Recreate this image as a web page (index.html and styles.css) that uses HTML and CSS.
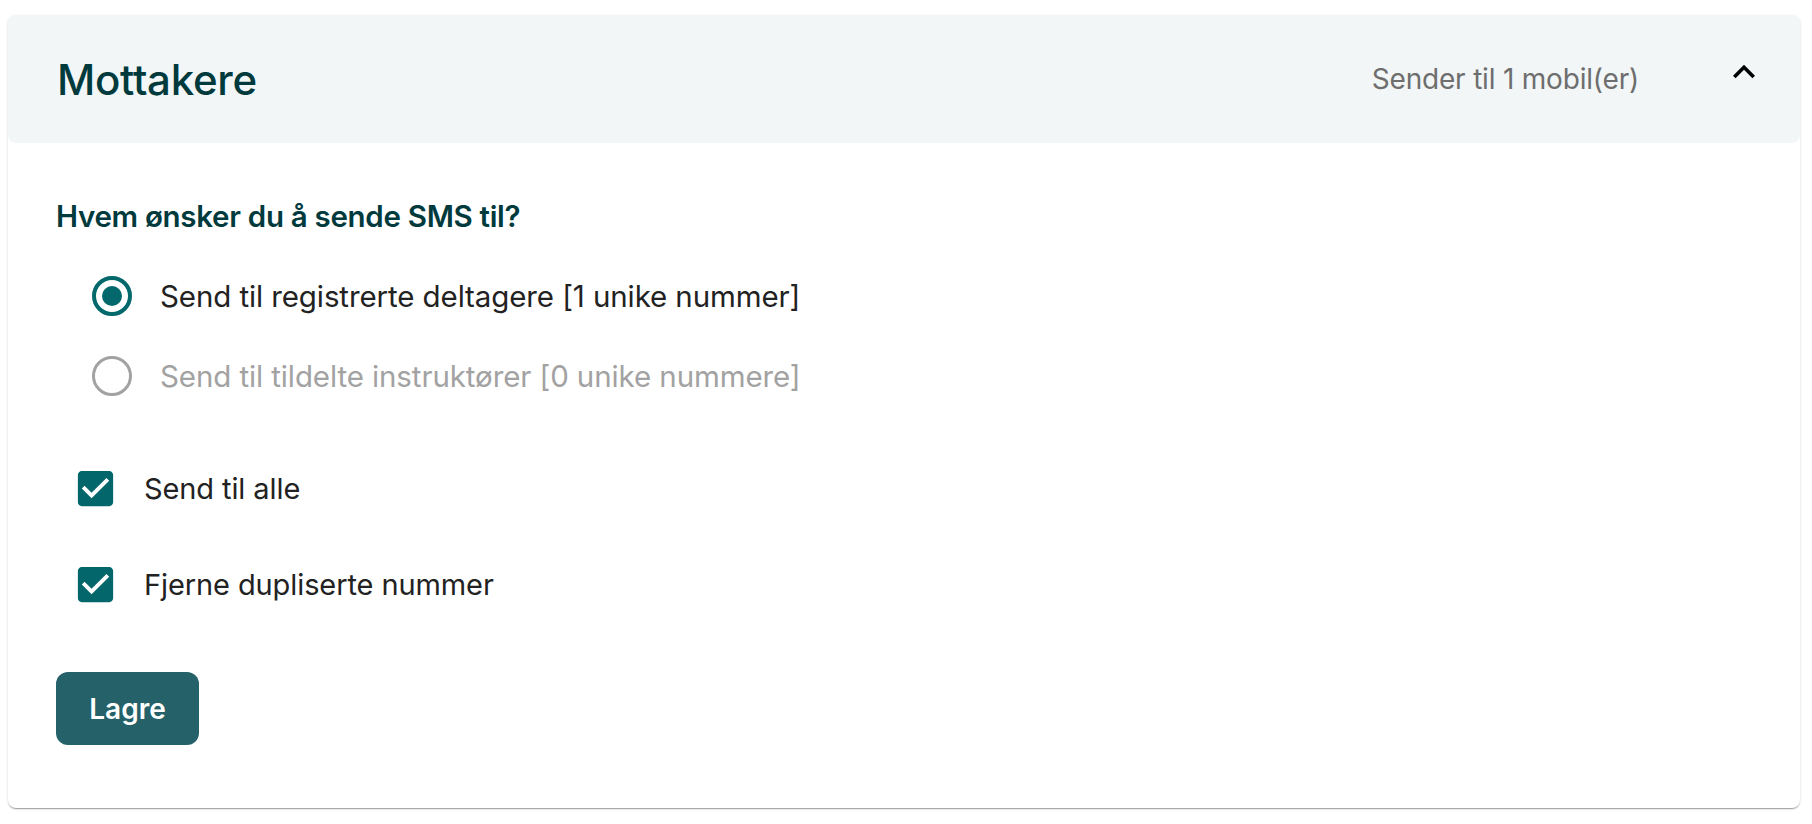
FILE: index.html
```html
<!DOCTYPE html>
<html lang="nb">
<head>
    <meta charset="UTF-8">
    <meta name="viewport" content="width=device-width, initial-scale=1.0">
    <title>Mottakere</title>
    <link rel="stylesheet" href="styles.css">
</head>
<body>

    <div class="page">
        <section class="panel">
            <header class="panel-header">
                <h1>Mottakere</h1>
                <span class="summary">Sender til 1 mobil(er)</span>
                <svg class="chevron" viewBox="0 0 24 24" width="44" height="44">
                    <path d="M12 8l-6 6 1.41 1.41L12 10.83l4.59 4.58L18 14z"/>
                </svg>
            </header>

            <form class="panel-body" id="recipientsForm">
                <h2>Hvem ønsker du å sende SMS til?</h2>

                <div class="radio-group">
                    <label class="radio-row">
                        <span class="radio checked"><span class="dot"></span></span>
                        <span>Send til registrerte deltagere [1 unike nummer]</span>
                    </label>
                    <label class="radio-row disabled">
                        <span class="radio"></span>
                        <span>Send til tildelte instruktører [0 unike nummere]</span>
                    </label>
                </div>

                <label class="check-row">
                    <svg class="checkbox" viewBox="0 0 24 24" width="47" height="47">
                        <path d="M19 3H5c-1.11 0-2 .9-2 2v14c0 1.1.89 2 2 2h14c1.11 0 2-.9 2-2V5c0-1.1-.89-2-2-2zm-9 14l-5-5 1.41-1.41L10 14.17l7.59-7.59L19 8l-9 9z"/>
                    </svg>
                    <span>Send til alle</span>
                </label>
                <label class="check-row">
                    <svg class="checkbox" viewBox="0 0 24 24" width="47" height="47">
                        <path d="M19 3H5c-1.11 0-2 .9-2 2v14c0 1.1.89 2 2 2h14c1.11 0 2-.9 2-2V5c0-1.1-.89-2-2-2zm-9 14l-5-5 1.41-1.41L10 14.17l7.59-7.59L19 8l-9 9z"/>
                    </svg>
                    <span>Fjerne dupliserte nummer</span>
                </label>

                <button type="submit" class="save">Lagre</button>
            </form>
        </section>
    </div>

</body>
</html>
```

FILE: styles.css
```css
/* styles.css */
body {
    margin: 0;
    font-family: Inter, "Noto Sans", sans-serif;
    background-color: #ffffff;
    color: #222222;
}

.page {
    padding: 15px 12px 16px 8px;
}

.panel {
    background-color: #ffffff;
    border-radius: 8px;
    box-shadow: 0 2px 1px -1px rgba(0, 0, 0, 0.2), 0 1px 1px 0 rgba(0, 0, 0, 0.14), 0 1px 3px 0 rgba(0, 0, 0, 0.12);
}

.panel-header {
    display: flex;
    align-items: center;
    height: 128px;
    padding: 0 34px 0 49px;
    background-color: #f2f6f7;
    border-radius: 8px;
}

.panel-header h1 {
    margin: 0;
    flex: 1;
    font-size: 42px;
    font-weight: 500;
    letter-spacing: -0.3px;
    color: #013a3d;
}

.summary {
    font-size: 28px;
    letter-spacing: -0.2px;
    color: #6e6e6e;
}

.chevron {
    margin-left: 83px;
    margin-bottom: 14px;
    fill: #000000;
}

.panel-body {
    padding: 57px 48px 63px 48px;
}

.panel-body h2 {
    margin: 0;
    height: 32px;
    line-height: 32px;
    font-size: 29.5px;
    font-weight: 600;
    letter-spacing: -0.3px;
    color: #013a3d;
}

.radio-group {
    margin: 24px 0 24px 36px;
}

.radio-row, .check-row {
    display: flex;
    align-items: center;
    font-size: 29px;
    letter-spacing: -0.1px;
    color: #222222;
    cursor: pointer;
}

.radio-row {
    height: 80px;
    gap: 28px;
    font-size: 29.5px;
}

.radio {
    width: 40px;
    height: 40px;
    flex-shrink: 0;
    box-sizing: border-box;
    border: 3px solid #a2a2a2;
    border-radius: 50%;
    display: flex;
    align-items: center;
    justify-content: center;
}

.radio.checked {
    border: 4px solid #02686c;
}

.radio .dot {
    width: 20px;
    height: 20px;
    border-radius: 50%;
    background-color: #02686c;
}

.radio-row.disabled {
    color: #a2a2a2;
    cursor: default;
}

.check-row {
    height: 96px;
    gap: 25px;
    margin-left: 16px;
}

.checkbox {
    flex-shrink: 0;
    fill: #02666a;
}

.save {
    margin-top: 40px;
    width: 143px;
    height: 73px;
    border: none;
    border-radius: 12px;
    background-color: #246169;
    color: #ffffff;
    font-family: Inter, "Noto Sans", sans-serif;
    font-size: 28px;
    font-weight: 600;
    cursor: pointer;
}

.save:hover {
    background-color: #1d535a;
}
```
